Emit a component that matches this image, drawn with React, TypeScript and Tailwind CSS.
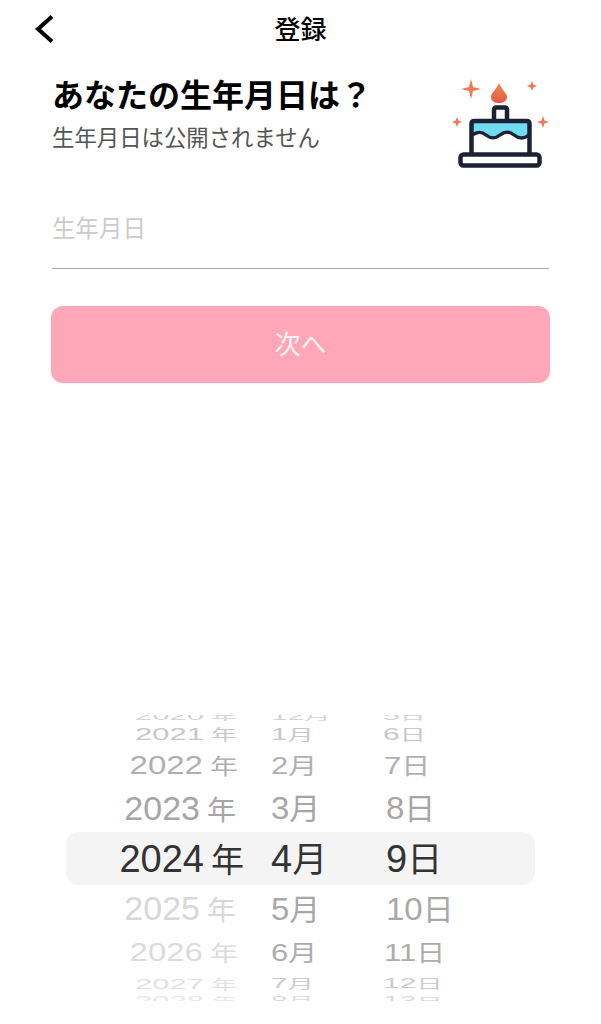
const font = "font-['Liberation_Sans','Noto_Sans_CJK_JP',sans-serif]";

const rows = [
  { h: 'h-[7px] items-end', s: 'scale-y-[.4] origin-bottom', c: 'text-[#d4d4d4]', y: '2020', m: '12', d: '5', ys: 'text-[31px]', ky: 'text-[26px]', cs: 'text-[30px]', kj: 'text-[26px]', ypr: 'pr-[34px]', dpl: 'pl-[0px]' },
  { h: 'h-[24px] items-center', s: 'scale-y-[.55]', c: 'text-[#c8c8c8]', y: '2021', m: '1', d: '6', ys: 'text-[31px]', ky: 'text-[26px]', cs: 'text-[30px]', kj: 'text-[26px]', ypr: 'pr-[34px]', dpl: 'pl-[0px]' },
  { h: 'h-[39px] items-center', s: 'scale-y-[.78]', c: 'text-[#b0b0b0]', y: '2022', m: '2', d: '7', ys: 'text-[33px]', ky: 'text-[28px]', cs: 'text-[31px]', kj: 'text-[29px]', ypr: 'pr-[33px]', dpl: 'pl-[1px]' },
  { h: 'h-[47px] items-center', s: 'scale-y-[.95]', c: 'text-[#a6a6a6]', y: '2023', m: '3', d: '8', ys: 'text-[34px]', ky: 'text-[29px]', cs: 'text-[33px]', kj: 'text-[31px]', ypr: 'pr-[35px]', dpl: 'pl-[3px]' },
  { h: 'h-[53px] items-center', s: '', c: 'text-[#333333]', y: '2024', m: '4', d: '9', ys: 'text-[38px]', ky: 'text-[33px]', cs: 'text-[38px]', kj: 'text-[35px]', ypr: 'pr-[27px]', dpl: 'pl-[3px]' },
  { h: 'h-[48px] items-center', s: 'scale-y-[.95]', c: 'text-[#d8d8d8]', m2: 'text-[#a8a8a8]', y: '2025', m: '5', d: '10', ys: 'text-[34px]', ky: 'text-[29px]', cs: 'text-[33px]', kj: 'text-[31px]', ypr: 'pr-[35px]', dpl: 'pl-[3px]' },
  { h: 'h-[38px] items-center', s: 'scale-y-[.78]', c: 'text-[#dcdcdc]', m2: 'text-[#adadad]', y: '2026', m: '6', d: '11', ys: 'text-[33px]', ky: 'text-[28px]', cs: 'text-[31px]', kj: 'text-[29px]', ypr: 'pr-[33px]', dpl: 'pl-[1px]' },
  { h: 'h-[24px] items-center', s: 'scale-y-[.5]', c: 'text-[#e2e2e2]', m2: 'text-[#cccccc]', y: '2027', m: '7', d: '12', ys: 'text-[31px]', ky: 'text-[26px]', cs: 'text-[30px]', kj: 'text-[26px]', ypr: 'pr-[34px]', dpl: 'pl-[0px]' },
  { h: 'h-[6px] items-start', s: 'scale-y-[.4] origin-top', c: 'text-[#e8e8e8]', m2: 'text-[#dadada]', y: '2028', m: '8', d: '13', ys: 'text-[31px]', ky: 'text-[26px]', cs: 'text-[30px]', kj: 'text-[26px]', ypr: 'pr-[34px]', dpl: 'pl-[0px]' },
];

const Cake = () => (
  <svg width="130" height="120" viewBox="0 0 130 120" className="shrink-0 mt-[2px]">
    <defs>
      <linearGradient id="flame" x1="0" y1="0" x2="0" y2="1">
        <stop offset="0" stopColor="#f08a4b" />
        <stop offset="1" stopColor="#e2574c" />
      </linearGradient>
    </defs>
    <path d="M69 23C72 30 77 33 77 37C77 41 73 43 69 43C65 43 61 41 61 37C61 33 66 30 69 23Z" fill="url(#flame)" />
    <path d="M41 19L43 27L51 29L43 31L41 39L39 31L31 29L39 27Z" fill="#ee7b55" />
    <path d="M102 21L103.400 24.600L107 26L103.400 27.400L102 31L100.600 27.400L97 26L100.600 24.600Z" fill="#ee7b55" />
    <path d="M27 57L28.400 60.600L32 62L28.400 63.400L27 67L25.600 63.400L22 62L25.600 60.600Z" fill="#ee7b55" />
    <path d="M113 56L114.500 60.500L119 62L114.500 63.500L113 68L111.500 63.500L107 62L111.500 60.500Z" fill="#ee7b55" />
    <path d="M42 61H99V75C94 79 89 79 84 75C79 71 75 71 70 75C65 79 61 79 56 75C51 71 47 72 42 75Z" fill="#6fdcf2" />
    <path d="M42 75C47 72 51 71 56 75C61 79 65 79 70 75C75 71 79 71 84 75C89 79 94 79 99 75" fill="none" stroke="#1c2233" strokeWidth="3.500" />
    <path d="M64 60V50C64 48.500 65 47.500 66.500 47.500H74.500C76 47.500 77 48.500 77 50V60" fill="none" stroke="#1c2233" strokeWidth="4.500" />
    <path d="M41.500 94V64C41.500 62 42.500 61 44.500 61H96.500C98.500 61 99.500 62 99.500 64V94" fill="none" stroke="#1c2233" strokeWidth="4.500" />
    <rect x="30.500" y="94.500" width="79" height="11" rx="3" fill="#fff" stroke="#1c2233" strokeWidth="4.500" />
  </svg>
);

export default function App() {
  return (
    <div className={`${font} w-[601px] h-[1024px] bg-white overflow-hidden text-black`}>
      <header className="h-[58px] grid grid-cols-[1fr_auto_1fr] items-center pl-[34px]">
        <svg width="22" height="30" viewBox="0 0 22 30">
          <path d="M18 2.500L4 15L18 27.500" fill="none" stroke="#000" strokeWidth="4" />
        </svg>
        <h2 className="text-[26px] font-medium leading-none mr-[34px] pt-[2px]">登録</h2>
        <div />
      </header>

      <div className="flex pl-[52px] h-[122px]">
        <div className="w-[378px] pt-[18px]">
          <h1 className="text-[32px] leading-[40px] font-bold whitespace-nowrap">あなたの生年月日は？</h1>
          <p className="text-[22.400px] leading-[30px] mt-[8px] text-[#555555] whitespace-nowrap">生年月日は公開されません</p>
        </div>
        <Cake />
      </div>

      <div className="mx-[52px] h-[89px] pt-[31px] border-b border-[#aaaaaa] text-[23.500px] leading-[36px] text-[#cccccc]">生年月日</div>

      <button className="mt-[37px] ml-[51px] w-[499px] h-[77px] pt-[1px] rounded-[12px] bg-[#ffa6b8] text-[26px] text-[#fff3f5] block">次へ</button>

      <div className="mt-[332px] mx-[66px] w-[469px]">
        {rows.map((r) => (
          <div
            key={r.y}
            className={`${r.h} ${r.y === '2024' ? 'bg-[#f4f4f4] rounded-[12px]' : ''} grid grid-cols-[205px_112px_152px] grid-rows-[100%] overflow-hidden leading-none whitespace-nowrap`}
          >
            <div className={`${r.c} ${r.s} ${r.ypr} flex items-baseline justify-end gap-[7px]`}>
              <span className={r.ys}>{r.y}</span>
              <span className={r.ky}>年</span>
            </div>
            <div className={`${r.m2 ?? r.c} ${r.s} flex items-baseline`}>
              <span className={r.cs}>{r.m}</span>
              <span className={r.kj}>月</span>
            </div>
            <div className={`${r.m2 ?? r.c} ${r.s} ${r.dpl} flex items-baseline`}>
              <span className={r.cs}>{r.d}</span>
              <span className={r.kj}>日</span>
            </div>
          </div>
        ))}
      </div>
    </div>
  );
}
